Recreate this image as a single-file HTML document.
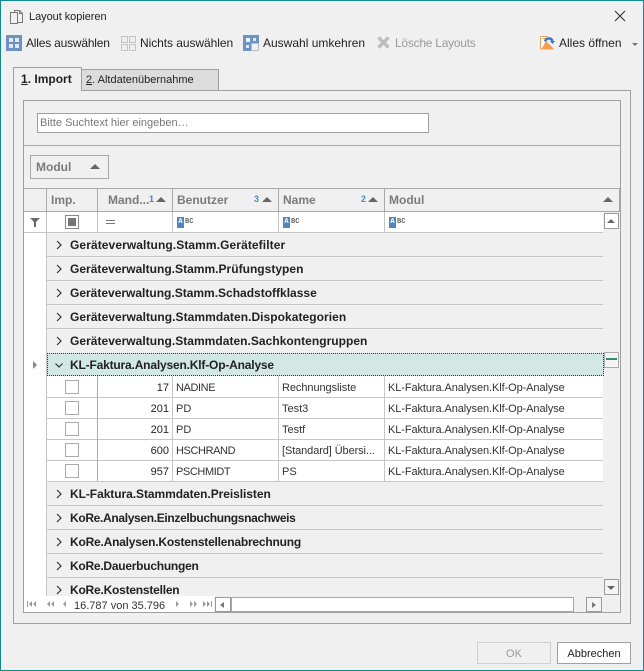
<!DOCTYPE html>
<html><head><meta charset="utf-8"><style>
html,body{margin:0;padding:0}
body{width:644px;height:671px;overflow:hidden;background:#f0f0f0}
#w{position:absolute;left:0;top:0;width:642px;height:669px;border:1px solid #0f8a8f;background:#f0f0f0;font:12px "Liberation Sans",sans-serif;color:#222}
#r{position:absolute;left:-1px;top:-1px;width:644px;height:671px;overflow:hidden}
.t,.b,svg.i{position:absolute}
.t{white-space:nowrap;line-height:16px;height:16px}
.b{box-sizing:border-box}
.g{font-weight:bold;font-size:12px;color:#222;left:70px}
.hd{font-weight:bold;font-size:12px;color:#7b7b7b}
.n{text-align:right;font-size:11px}
.d{font-size:11px;color:#333}
.u{letter-spacing:-.4px}
.m{letter-spacing:-.09px}
.c{left:65px;width:14px;height:14px;border:1px solid #aaa;background:#fff;box-sizing:border-box;position:absolute}
.ln{position:absolute;background:#c6c6c6}
.v{position:absolute;background:#c6c6c6;width:1px}
.abc{position:absolute;width:16px;height:11px}
.abc i{position:absolute;left:0;top:0;width:7px;height:11px;background:#4f87bd;color:#fff;font:bold 7px/11px "Liberation Mono",monospace;text-align:center}
.abc b{position:absolute;left:8px;top:0;font:bold 7px/11px "Liberation Mono",monospace;color:#666}
.sn{font:bold 9px/12px "Liberation Sans",sans-serif;color:#4f87bd;height:9px;overflow:hidden;top:193px}
</style></head><body><div id="w"><div id="r">

<!-- title -->
<svg class="i" style="left:9px;top:9px" width="16" height="16" viewBox="0 0 16 16" fill="none" stroke="#777"><path d="M1.5 3.500h7v11h-7z M5.500 3V1.500h5l3 3v9h-5"/><path d="M10.500 1.500v3h3"/></svg>
<div class="t" style="left:29px;top:9px;font-size:11px;letter-spacing:-.05px">Layout kopieren</div>
<svg class="i" style="left:614px;top:10px" width="12" height="12" viewBox="0 0 12 12" stroke="#333" stroke-width="1.100"><path d="M1 1l10 10M11 1L1 11"/></svg>

<!-- toolbar -->
<svg class="i" style="left:6px;top:35px" width="16" height="16"><rect width="16" height="16" fill="#6d93c2"/><rect x="3" y="3" width="4" height="4" fill="#dfe8f3"/><rect x="9" y="3" width="4" height="4" fill="#dfe8f3"/><rect x="3" y="9" width="4" height="4" fill="#dfe8f3"/><rect x="9" y="9" width="4" height="4" fill="#dfe8f3"/></svg>
<div class="t" style="left:26px;top:35px;letter-spacing:-.2px">Alles auswählen</div>
<svg class="i" style="left:121px;top:36px" width="15" height="15" fill="#eee" stroke="#c4c4c4" stroke-width="1"><rect x=".5" y=".5" width="6" height="6"/><rect x="8.500" y=".5" width="6" height="6"/><rect x=".5" y="8.500" width="6" height="6"/><rect x="8.500" y="8.500" width="6" height="6"/></svg>
<div class="t" style="left:140px;top:35px;letter-spacing:-.06px">Nichts auswählen</div>
<svg class="i" style="left:243px;top:35px" width="16" height="16"><rect width="16" height="8" fill="#6d93c2"/><rect y="8" width="8" height="8" fill="#6d93c2"/><rect x="8.500" y="8.500" width="7" height="7" fill="#eee" stroke="#bbb"/><rect x="3" y="3" width="4" height="4" fill="#f0f4f9"/><rect x="10" y="3" width="3" height="3" fill="#dfe8f3"/><rect x="3" y="10" width="3" height="3" fill="#dfe8f3"/></svg>
<div class="t" style="left:263px;top:35px">Auswahl umkehren</div>
<svg class="i" style="left:377px;top:36px" width="13" height="13" stroke="#bdbdbd" stroke-width="3.400"><path d="M1.500 1.500l10 10M11.500 1.500l-10 10"/></svg>
<div class="t" style="left:395px;top:35px;color:#9a9a9a;letter-spacing:-.25px">Lösche Layouts</div>
<svg class="i" style="left:540px;top:36px" width="15" height="14"><path d="M.5.500h7v2H.5z" fill="#fff" stroke="#e8a460"/><path d="M.5.500v12.500h13" fill="#fff" stroke="#e8a460"/><path d="M1.500 13L6 5l8 8z" fill="#f0a050"/><path d="M5 5.500C6 2 11 1 12.500 5" fill="none" stroke="#3c78b8" stroke-width="2.500"/><path d="M10 5h5l-2.500 3z" fill="#3c78b8"/></svg>
<div class="t" style="left:559px;top:35px">Alles öffnen</div>
<div class="b" style="left:632px;top:43px;border:3px solid transparent;border-top:3px solid #777;border-bottom:0"></div>

<!-- tabs -->
<div class="b" style="left:13px;top:90px;width:618px;height:534px;border:1px solid #a0a0a0;background:#f0f0f0"></div>
<div class="b" style="left:81px;top:69px;width:138px;height:22px;border:1px solid #a0a0a0;background:#dcdcdc"></div>
<div class="b" style="left:13px;top:67px;width:69px;height:24px;border:1px solid #a0a0a0;border-bottom:0;background:#f0f0f0"></div>
<div class="t" style="left:21px;top:71px;font-size:12px;font-weight:bold"><u>1</u>. Import</div>
<div class="t" style="left:86px;top:72px;font-size:11px"><u>2</u>. Altdatenübernahme</div>

<!-- inner -->
<div class="b" style="left:23px;top:100px;width:598px;height:513px;border:1px solid #a0a0a0;background:#f0f0f0"></div>
<div class="b" style="left:37px;top:113px;width:392px;height:20px;border:1px solid #a0a0a0;background:#fff"></div>
<div class="t" style="left:40px;top:115px;font-size:11px;color:#777">Bitte Suchtext hier eingeben…</div>
<div class="ln" style="left:24px;top:145px;width:596px;height:1px;background:#a8a8a8"></div>
<div class="b" style="left:30px;top:155px;width:79px;height:24px;border:1px solid #a8a8a8"></div>
<div class="t hd" style="left:36px;top:159px">Modul</div>
<div class="b" style="left:90px;top:164px;border:5px solid transparent;border-bottom:5px solid #666;border-top:0"></div>

<!-- header -->
<div class="ln" style="left:24px;top:188px;width:596px;height:1px;background:#a8a8a8"></div>
<div class="ln" style="left:24px;top:211px;width:596px;height:1px;background:#a8a8a8"></div>
<div class="v" style="left:46px;top:188px;height:23px;background:#a8a8a8"></div>
<div class="v" style="left:97px;top:188px;height:23px;background:#a8a8a8"></div>
<div class="v" style="left:172px;top:188px;height:23px;background:#a8a8a8"></div>
<div class="v" style="left:278px;top:188px;height:23px;background:#a8a8a8"></div>
<div class="v" style="left:384px;top:188px;height:23px;background:#a8a8a8"></div>
<div class="v" style="left:619px;top:188px;height:23px;background:#a8a8a8"></div>
<div class="t hd" style="left:51px;top:192px">Imp.</div>
<div class="t hd" style="left:108px;top:192px">Mand...</div>
<div class="t sn" style="left:149px">1</div>
<div class="b" style="left:156px;top:197px;border:5px solid transparent;border-bottom:5px solid #666;border-top:0"></div>
<div class="t hd" style="left:177px;top:192px">Benutzer</div>
<div class="t sn" style="left:254px">3</div>
<div class="b" style="left:262px;top:197px;border:5px solid transparent;border-bottom:5px solid #666;border-top:0"></div>
<div class="t hd" style="left:283px;top:192px">Name</div>
<div class="t sn" style="left:361px">2</div>
<div class="b" style="left:368px;top:197px;border:5px solid transparent;border-bottom:5px solid #666;border-top:0"></div>
<div class="t hd" style="left:389px;top:192px">Modul</div>
<div class="b" style="left:603px;top:197px;border:5px solid transparent;border-bottom:5px solid #666;border-top:0"></div>

<!-- filter row -->
<div class="b" style="left:24px;top:212px;width:579px;height:20px;background:#fff"></div>
<div class="b" style="left:24px;top:232px;width:23px;height:364px;background:#fff"></div>
<div class="ln" style="left:24px;top:232px;width:579px;height:1px"></div>
<div class="v" style="left:46px;top:212px;height:20px"></div>
<div class="v" style="left:97px;top:212px;height:20px"></div>
<div class="v" style="left:172px;top:212px;height:20px"></div>
<div class="v" style="left:278px;top:212px;height:20px"></div>
<div class="v" style="left:384px;top:212px;height:20px"></div>
<svg class="i" style="left:30px;top:218px" width="10" height="9"><path d="M0 0h10L6 4v5H4V4z" fill="#666"/></svg>
<div class="b" style="left:65px;top:215px;width:14px;height:14px;border:1px solid #888;background:#fff"></div>
<div class="b" style="left:68px;top:218px;width:8px;height:8px;background:#777"></div>
<div class="b" style="left:106px;top:220px;width:9px;height:1px;background:#777"></div>
<div class="b" style="left:106px;top:223px;width:9px;height:1px;background:#777"></div>
<div class="abc" style="left:177px;top:217px"><i>A</i><b>BC</b></div>
<div class="abc" style="left:283px;top:217px"><i>A</i><b>BC</b></div>
<div class="abc" style="left:389px;top:217px"><i>A</i><b>BC</b></div>

<!-- group rows -->
<div class="ln" style="left:47px;top:256px;width:556px;height:1px"></div>
<div class="ln" style="left:47px;top:280px;width:556px;height:1px"></div>
<div class="ln" style="left:47px;top:304px;width:556px;height:1px"></div>
<div class="ln" style="left:47px;top:328px;width:556px;height:1px"></div>
<div class="ln" style="left:47px;top:505px;width:556px;height:1px"></div>
<div class="ln" style="left:47px;top:529px;width:556px;height:1px"></div>
<div class="ln" style="left:47px;top:553px;width:556px;height:1px"></div>
<div class="ln" style="left:47px;top:577px;width:556px;height:1px"></div>
<div class="v" style="left:46px;top:233px;height:363px"></div>

<div class="t g" style="top:237px;letter-spacing:.09px">Geräteverwaltung.Stamm.Gerätefilter</div>
<div class="t g" style="top:261px;letter-spacing:.02px">Geräteverwaltung.Stamm.Prüfungstypen</div>
<div class="t g" style="top:285px">Geräteverwaltung.Stamm.Schadstoffklasse</div>
<div class="t g" style="top:309px;letter-spacing:.05px">Geräteverwaltung.Stammdaten.Dispokategorien</div>
<div class="t g" style="top:333px;letter-spacing:.03px">Geräteverwaltung.Stammdaten.Sachkontengruppen</div>
<div class="t g" style="top:486px;letter-spacing:-.06px">KL-Faktura.Stammdaten.Preislisten</div>
<div class="t g" style="top:510px;letter-spacing:-.33px">KoRe.Analysen.Einzelbuchungsnachweis</div>
<div class="t g" style="top:534px;letter-spacing:-.21px">KoRe.Analysen.Kostenstellenabrechnung</div>
<div class="t g" style="top:558px;letter-spacing:-.25px">KoRe.Dauerbuchungen</div>
<div class="t g" style="top:582px;height:14px;overflow:hidden;letter-spacing:-.22px">KoRe.Kostenstellen</div>

<svg class="i" style="left:56px;top:241px" width="6" height="356" fill="none" stroke="#333" stroke-width="1.200"><path d="M1 0l4 4-4 4M1 24l4 4-4 4M1 48l4 4-4 4M1 72l4 4-4 4M1 96l4 4-4 4M1 249l4 4-4 4M1 273l4 4-4 4M1 297l4 4-4 4M1 321l4 4-4 4M1 345l4 4-4 4"/></svg>

<!-- selected group -->
<div class="b" style="left:47px;top:353px;width:557px;height:23px;background:#d2e8e2;border:1px dotted #333"></div>
<div class="t g" style="top:357px;letter-spacing:-.18px">KL-Faktura.Analysen.Klf-Op-Analyse</div>
<svg class="i" style="left:55px;top:363px" width="8" height="5" fill="none" stroke="#333" stroke-width="1.200"><path d="M.5 .5l3.500 3.500 3.500-3.500"/></svg>
<div class="b" style="left:33px;top:361px;border:4px solid transparent;border-left:4px solid #888;border-right:0"></div>

<!-- data rows -->
<div class="b" style="left:47px;top:376px;width:556px;height:106px;background:#fff"></div>
<div class="ln" style="left:47px;top:397px;width:556px;height:1px"></div>
<div class="ln" style="left:47px;top:418px;width:556px;height:1px"></div>
<div class="ln" style="left:47px;top:439px;width:556px;height:1px"></div>
<div class="ln" style="left:47px;top:460px;width:556px;height:1px"></div>
<div class="ln" style="left:47px;top:481px;width:556px;height:1px"></div>
<div class="v" style="left:97px;top:376px;height:105px;background:#a8a8a8"></div>
<div class="v" style="left:172px;top:376px;height:105px"></div>
<div class="v" style="left:278px;top:376px;height:105px"></div>
<div class="v" style="left:384px;top:376px;height:105px"></div>

<div class="c" style="top:380px"></div><div class="c" style="top:401px"></div><div class="c" style="top:422px"></div><div class="c" style="top:443px"></div><div class="c" style="top:464px"></div>

<div class="t n" style="left:100px;width:69px;top:380px">17</div>
<div class="t n" style="left:100px;width:69px;top:401px">201</div>
<div class="t n" style="left:100px;width:69px;top:422px">201</div>
<div class="t n" style="left:100px;width:69px;top:443px">600</div>
<div class="t n" style="left:100px;width:69px;top:464px">957</div>
<div class="t d u" style="left:176px;top:380px">NADINE</div>
<div class="t d" style="left:176px;top:401px">PD</div>
<div class="t d" style="left:176px;top:422px">PD</div>
<div class="t d u" style="left:176px;top:443px">HSCHRAND</div>
<div class="t d u" style="left:176px;top:464px">PSCHMIDT</div>
<div class="t d" style="left:282px;top:380px;letter-spacing:-.07px">Rechnungsliste</div>
<div class="t d" style="left:282px;top:401px">Test3</div>
<div class="t d" style="left:282px;top:422px">Testf</div>
<div class="t d" style="left:282px;top:443px;letter-spacing:-.1px">[Standard] Übersi...</div>
<div class="t d" style="left:282px;top:464px">PS</div>
<div class="t d m" style="left:388px;top:380px">KL-Faktura.Analysen.Klf-Op-Analyse</div>
<div class="t d m" style="left:388px;top:401px">KL-Faktura.Analysen.Klf-Op-Analyse</div>
<div class="t d m" style="left:388px;top:422px">KL-Faktura.Analysen.Klf-Op-Analyse</div>
<div class="t d m" style="left:388px;top:443px">KL-Faktura.Analysen.Klf-Op-Analyse</div>
<div class="t d m" style="left:388px;top:464px">KL-Faktura.Analysen.Klf-Op-Analyse</div>

<!-- vertical scroll buttons -->
<div class="b" style="left:604px;top:213px;width:15px;height:16px;border:1px solid #999;background:#fff"></div>
<div class="b" style="left:607px;top:219px;border:4px solid transparent;border-bottom:4px solid #666;border-top:0"></div>
<div class="b" style="left:604px;top:352px;width:15px;height:16px;border:1px solid #aaa;background:#f4f4f4"></div>
<div class="b" style="left:606px;top:358px;width:11px;height:2px;background:#2f8f6f"></div>
<div class="b" style="left:604px;top:579px;width:15px;height:16px;border:1px solid #999;background:#f4f4f4"></div>
<div class="b" style="left:607px;top:586px;border:4px solid transparent;border-top:4px solid #666;border-bottom:0"></div>

<!-- nav bar -->
<div class="b" style="left:24px;top:596px;width:190px;height:16px;background:#fff"></div>
<svg class="i" style="left:27px;top:601px" width="187" height="7" fill="#999"><rect x="0" y="0" width="1" height="6"/><path d="M5 0v6L2 3zM9 0v6L6 3zM23 0v6l-3-3zM27 0v6l-3-3zM39 0v6l-3-3zM149 0v6l3-3zM163 0v6l3-3zM167 0v6l3-3zM176 0v6l3-3zM180 0v6l3-3z"/><rect x="184" y="0" width="1" height="6"/></svg>
<div class="t" style="left:74px;top:598px;font-size:11px;color:#333">16.787 von 35.796</div>
<div class="b" style="left:215px;top:597px;width:16px;height:15px;border:1px solid #999;background:#fff"></div>
<div class="b" style="left:220px;top:602px;border:3px solid transparent;border-right:4px solid #777;border-left:0"></div>
<div class="b" style="left:231px;top:597px;width:343px;height:15px;border:1px solid #a8a8a8;background:#fff"></div>
<div class="b" style="left:586px;top:597px;width:16px;height:15px;border:1px solid #999;background:#f4f4f4"></div>
<div class="b" style="left:592px;top:602px;border:3px solid transparent;border-left:4px solid #777;border-right:0"></div>

<!-- buttons -->
<div class="b" style="left:477px;top:642px;width:74px;height:22px;border:1px solid #cfcfcf;background:#f0f0f0"></div>
<div class="t" style="left:477px;width:74px;text-align:center;top:646px;font-size:11px;color:#9a9a9a">OK</div>
<div class="b" style="left:557px;top:642px;width:74px;height:22px;border:1px solid #a0a0a0;background:#fff"></div>
<div class="t" style="left:557px;width:74px;text-align:center;top:646px;font-size:11px">Abbrechen</div>

</div></div></body></html>
